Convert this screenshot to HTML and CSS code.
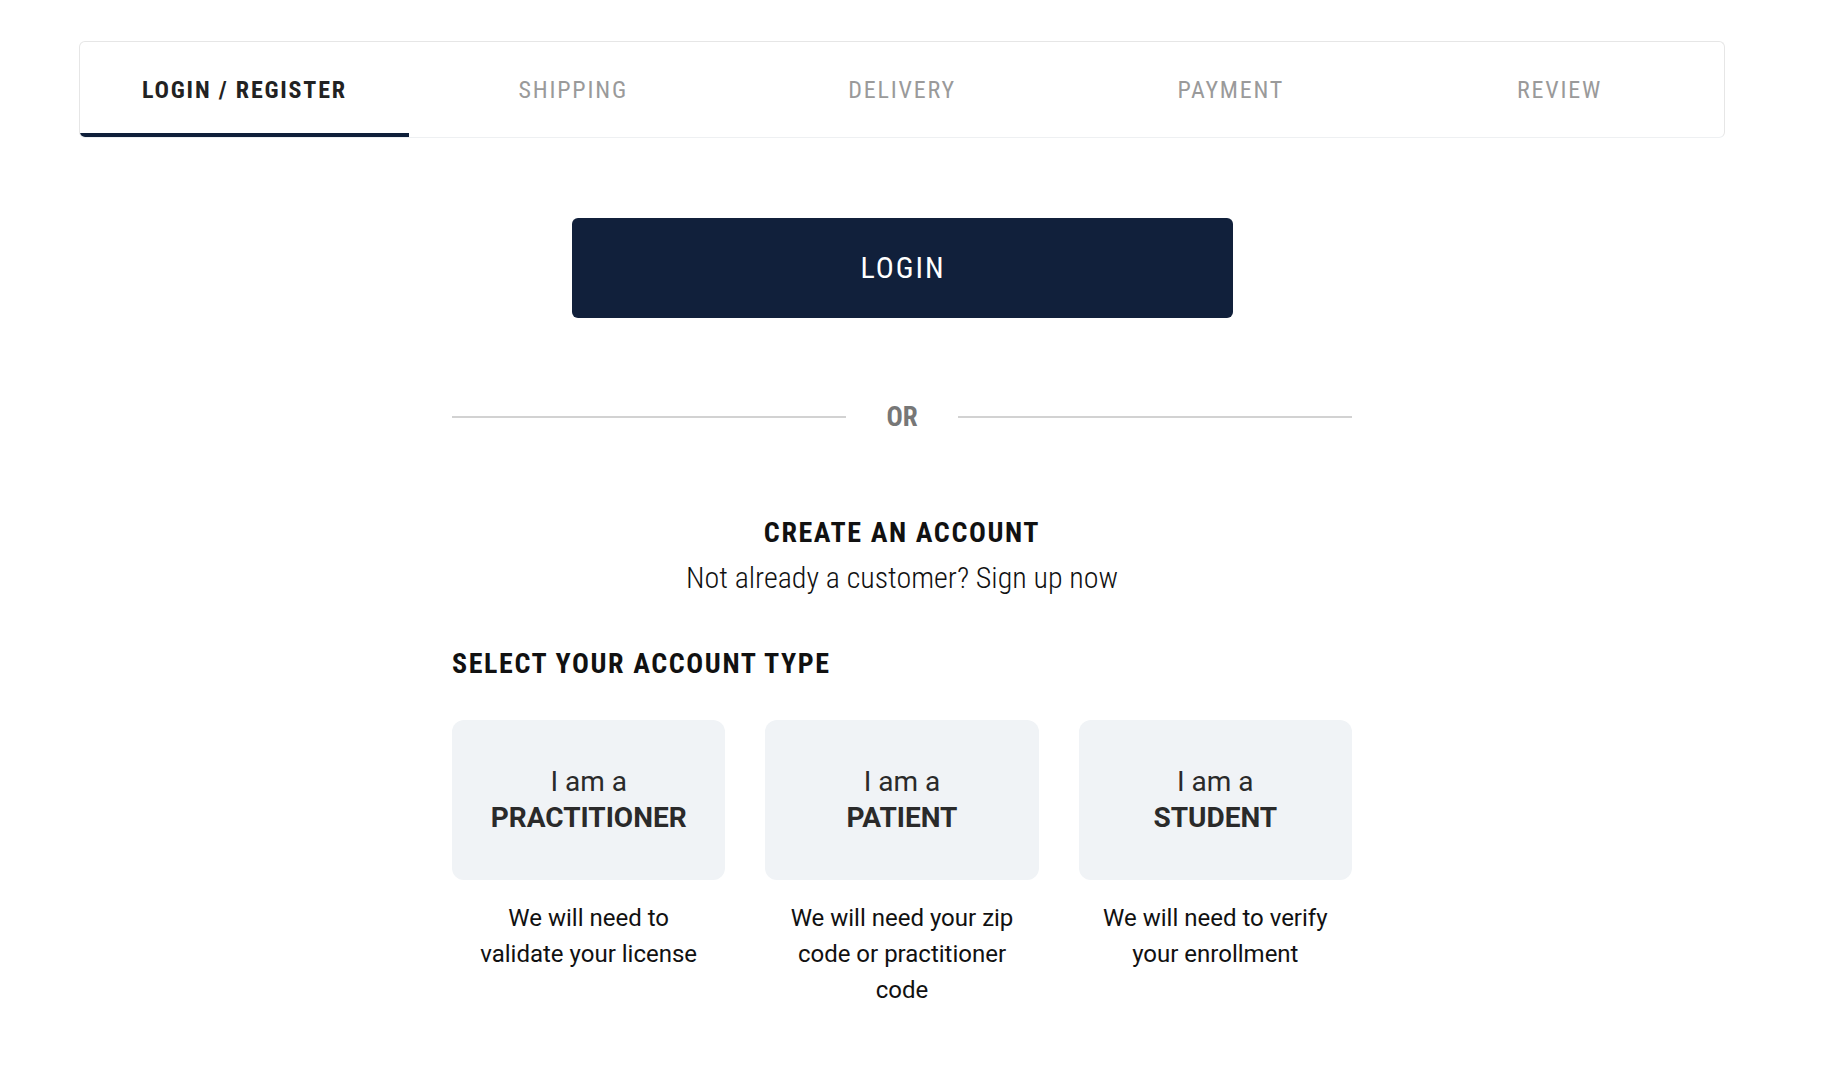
FILE: index.html
```html
<!DOCTYPE html>
<html lang="en">
<head>
<meta charset="utf-8">
<title>Checkout - Login / Register</title>
<link rel="stylesheet" href="styles.css">
</head>
<body>
<nav class="steps">
  <div class="step active">LOGIN / REGISTER</div>
  <div class="step">SHIPPING</div>
  <div class="step">DELIVERY</div>
  <div class="step">PAYMENT</div>
  <div class="step">REVIEW</div>
</nav>
<main class="content">
  <button class="login-btn" type="button">LOGIN</button>
  <div class="divider">
    <span class="divider-line"></span>
    <span class="divider-text">OR</span>
    <span class="divider-line"></span>
  </div>
  <h2 class="create-title">CREATE AN ACCOUNT</h2>
  <p class="create-sub">Not already a customer? Sign up now</p>
  <h3 class="select-title">SELECT YOUR ACCOUNT TYPE</h3>
  <div class="types">
    <div class="type">
      <div class="type-card"><span class="type-pre">I am a</span><span class="type-name">PRACTITIONER</span></div>
      <p class="type-desc">We will need to validate your license</p>
    </div>
    <div class="type">
      <div class="type-card"><span class="type-pre">I am a</span><span class="type-name">PATIENT</span></div>
      <p class="type-desc">We will need your zip code or practitioner code</p>
    </div>
    <div class="type">
      <div class="type-card"><span class="type-pre">I am a</span><span class="type-name">STUDENT</span></div>
      <p class="type-desc">We will need to verify your enrollment</p>
    </div>
  </div>
</main>
</body>
</html>
```
FILE: styles.css
```css
* { box-sizing: border-box; }
html, body { margin: 0; padding: 0; background: #fff; }
body { font-family: Roboto, "Liberation Sans", sans-serif; color: #111; }

.steps {
  display: flex;
  margin: 41px 0 0 79px;
  width: 1646px;
  height: 97px;
  border: 1px solid #e6e6e6;
  border-bottom-color: #eef0f2;
  border-radius: 6px;
  overflow: hidden;
}
.step {
  flex: 1 1 0;
  display: flex;
  align-items: center;
  justify-content: center;
  font-stretch: 75%;
  font-size: 24px;
  letter-spacing: 1.8px;
  color: #9a9a9a;
  border-bottom: 4px solid transparent;
  padding-top: 4px;
}
.step.active {
  color: #222;
  font-weight: 700;
  border-bottom-color: #0f1f3a;
}

.content {
  width: 900px;
  margin: 80px 0 0 452px;
  display: flex;
  flex-direction: column;
  align-items: center;
}
.login-btn {
  width: 661px;
  height: 100px;
  border: 0;
  border-radius: 6px;
  background: #11203b;
  color: #fff;
  font-family: Roboto, sans-serif;
  font-stretch: 75%;
  font-size: 30px;
  letter-spacing: 2px;
  padding: 0 0 2px 2px;
}
.divider {
  width: 100%;
  margin-top: 84px;
  height: 30px;
  display: flex;
  align-items: center;
  gap: 40px;
}
.divider-line { flex: 1; height: 2px; background: #d2d2d2; }
.divider-text {
  font-weight: 700;
  font-size: 27px;
  font-stretch: 87.5%;
  color: #777;
  line-height: 30px;
}
.create-title {
  margin: 83px 0 0;
  font-size: 28px;
  line-height: 36px;
  font-weight: 700;
  font-stretch: 75%;
  letter-spacing: 1.6px;
  color: #111;
}
.create-sub {
  margin: 7px 0 0;
  font-size: 30px;
  line-height: 40px;
  font-weight: 300;
  font-stretch: 75%;
  color: #111;
}
.select-title {
  align-self: flex-start;
  margin: 48px 0 0;
  font-size: 28px;
  line-height: 36px;
  font-weight: 700;
  font-stretch: 75%;
  letter-spacing: 1.6px;
  color: #111;
}
.types {
  width: 100%;
  margin-top: 38px;
  display: grid;
  grid-template-columns: repeat(3, 1fr);
  gap: 40px;
}
.type { display: flex; flex-direction: column; align-items: stretch; }
.type-card {
  height: 160px;
  border-radius: 12px;
  background: #f0f3f6;
  display: flex;
  flex-direction: column;
  align-items: center;
  justify-content: center;
  color: #2a2a2a;
  font-size: 28px;
  line-height: 36px;
}
.type-pre { font-weight: 400; }
.type-name { font-weight: 700; }
.type-desc {
  margin: 20px 0 0;
  padding: 0 18px;
  text-align: center;
  font-size: 24px;
  line-height: 36px;
  color: #111;
}
```
